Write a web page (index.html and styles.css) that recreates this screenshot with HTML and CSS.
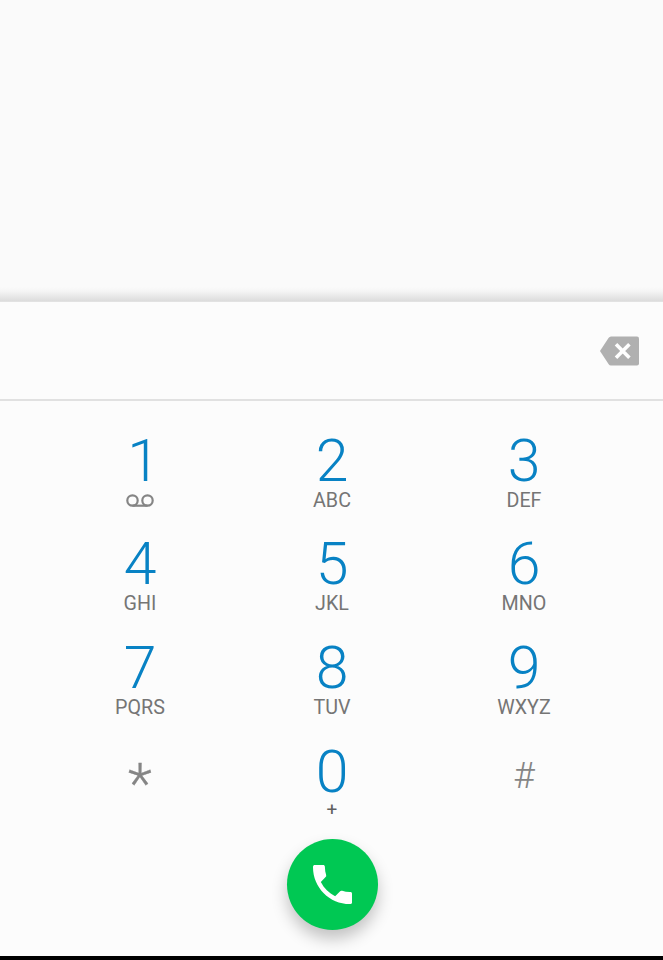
FILE: index.html
```html
<!DOCTYPE html>
<html lang="en">
<head>
<meta charset="utf-8">
<title>Phone</title>
<link rel="stylesheet" href="styles.css">
</head>
<body>
<main class="screen">
  <section class="history"></section>
  <section class="dialer">
    <div class="entry">
      <svg class="backspace" viewBox="0 0 39 30" aria-label="Delete"><path d="M11 0.5H37Q39 .5 39 2.500V27.500Q39 29.500 37 29.500H11Q9.500 29.500 8.500 28L0 15 8.500 2Q9.500 .5 11 .5Z" fill="#b0b0b0"/><path d="M16 8.300 29.400 21.700M29.400 8.300 16 21.700" stroke="#fff" stroke-width="3.600"/></svg>
    </div>
    <div class="keypad">
      <div class="key"><span class="digit one">1</span><svg class="voicemail" viewBox="0 0 28 13"><g fill="none" stroke="#858585" stroke-width="2.200"><circle cx="6.500" cy="6.500" r="5.200"/><circle cx="21.500" cy="6.500" r="5.200"/><path d="M6.500 11.700h15"/></g></svg></div>
      <div class="key"><span class="digit">2</span><span class="letters">ABC</span></div>
      <div class="key"><span class="digit">3</span><span class="letters">DEF</span></div>
      <div class="key"><span class="digit">4</span><span class="letters">GHI</span></div>
      <div class="key"><span class="digit">5</span><span class="letters">JKL</span></div>
      <div class="key"><span class="digit">6</span><span class="letters">MNO</span></div>
      <div class="key"><span class="digit">7</span><span class="letters">PQRS</span></div>
      <div class="key"><span class="digit">8</span><span class="letters">TUV</span></div>
      <div class="key"><span class="digit">9</span><span class="letters">WXYZ</span></div>
      <div class="key"><span class="symbol star">*</span></div>
      <div class="key"><span class="digit zero">0</span><span class="letters plus">+</span></div>
      <div class="key"><span class="symbol hash">#</span></div>
    </div>
    <button class="call" aria-label="Call"><svg viewBox="3 3 18 18"><path d="M6.620 10.790c1.440 2.830 3.760 5.140 6.590 6.590l2.200-2.200c.27-.27.67-.36 1.020-.24 1.120.37 2.330.57 3.570.57.55 0 1 .2 1 .6V20.400c0 .4-.45.6-1 .6-9.390 0-17-7.610-17-17 0-.55.25-1 .6-1h4.300c.35 0 .6.450.6 1 0 1.250.2 2.450.57 3.570.11.35.03.74-.25 1.020l-2.200 2.200z" fill="#fff"/></svg></button>
  </section>
  <div class="navigation"></div>
</main>
</body>
</html>
```
FILE: styles.css
```css
* { box-sizing: border-box; }
body { margin: 0; background: #fcfcfc; font-family: Roboto, "Liberation Sans", sans-serif; }
.screen { height: 960px; display: flex; flex-direction: column; overflow: hidden; }
.history { height: 302px; background: linear-gradient(#fafafa 0 287px, #f5f5f5 291px, #dcdcdc 301px, #e8e8e8 302px); }
.dialer { flex: 1; display: flex; flex-direction: column; align-items: center; background: #fcfcfc; }
.entry { width: 100%; height: 99px; display: flex; align-items: center; justify-content: flex-end; padding: 1px 24px 0 0; border-bottom: 2px solid #e1e1e1; }
.backspace { width: 39px; height: 30px; }
.keypad { display: grid; grid-template-columns: repeat(3, 192px); grid-template-rows: repeat(3, 103.300px) 104px; margin-top: 28px; margin-left: 1px; }
.key { display: flex; flex-direction: column; align-items: center; }
.digit { height: 60px; line-height: 63px; font-size: 59px; font-weight: 300; color: #0882c4; }
.one { padding-left: 7px; }
.zero { line-height: 65px; }
.letters { line-height: 24px; font-size: 19.700px; color: #757575; }
.plus { line-height: 21px; font-size: 19px; color: #606060; }
.voicemail { width: 28px; height: 13px; margin-top: 5px; }
.symbol { color: #858585; }
.star { font-size: 56px; font-weight: 300; line-height: 64px; padding-top: 13px; -webkit-text-stroke: .3px #858585; }
.hash { font-size: 37px; font-weight: 300; line-height: 64px; padding-top: 5px; }
.call { width: 91px; height: 91px; display: grid; place-items: center; flex: none; margin: -4px 0 0 1px; padding: 0; border: 0; border-radius: 50%; background: #00c853; box-shadow: 0 9px 16px rgba(0,0,0,.23); }
.call svg { width: 39px; height: 39px; }
.navigation { height: 4px; background: #000; }
```
